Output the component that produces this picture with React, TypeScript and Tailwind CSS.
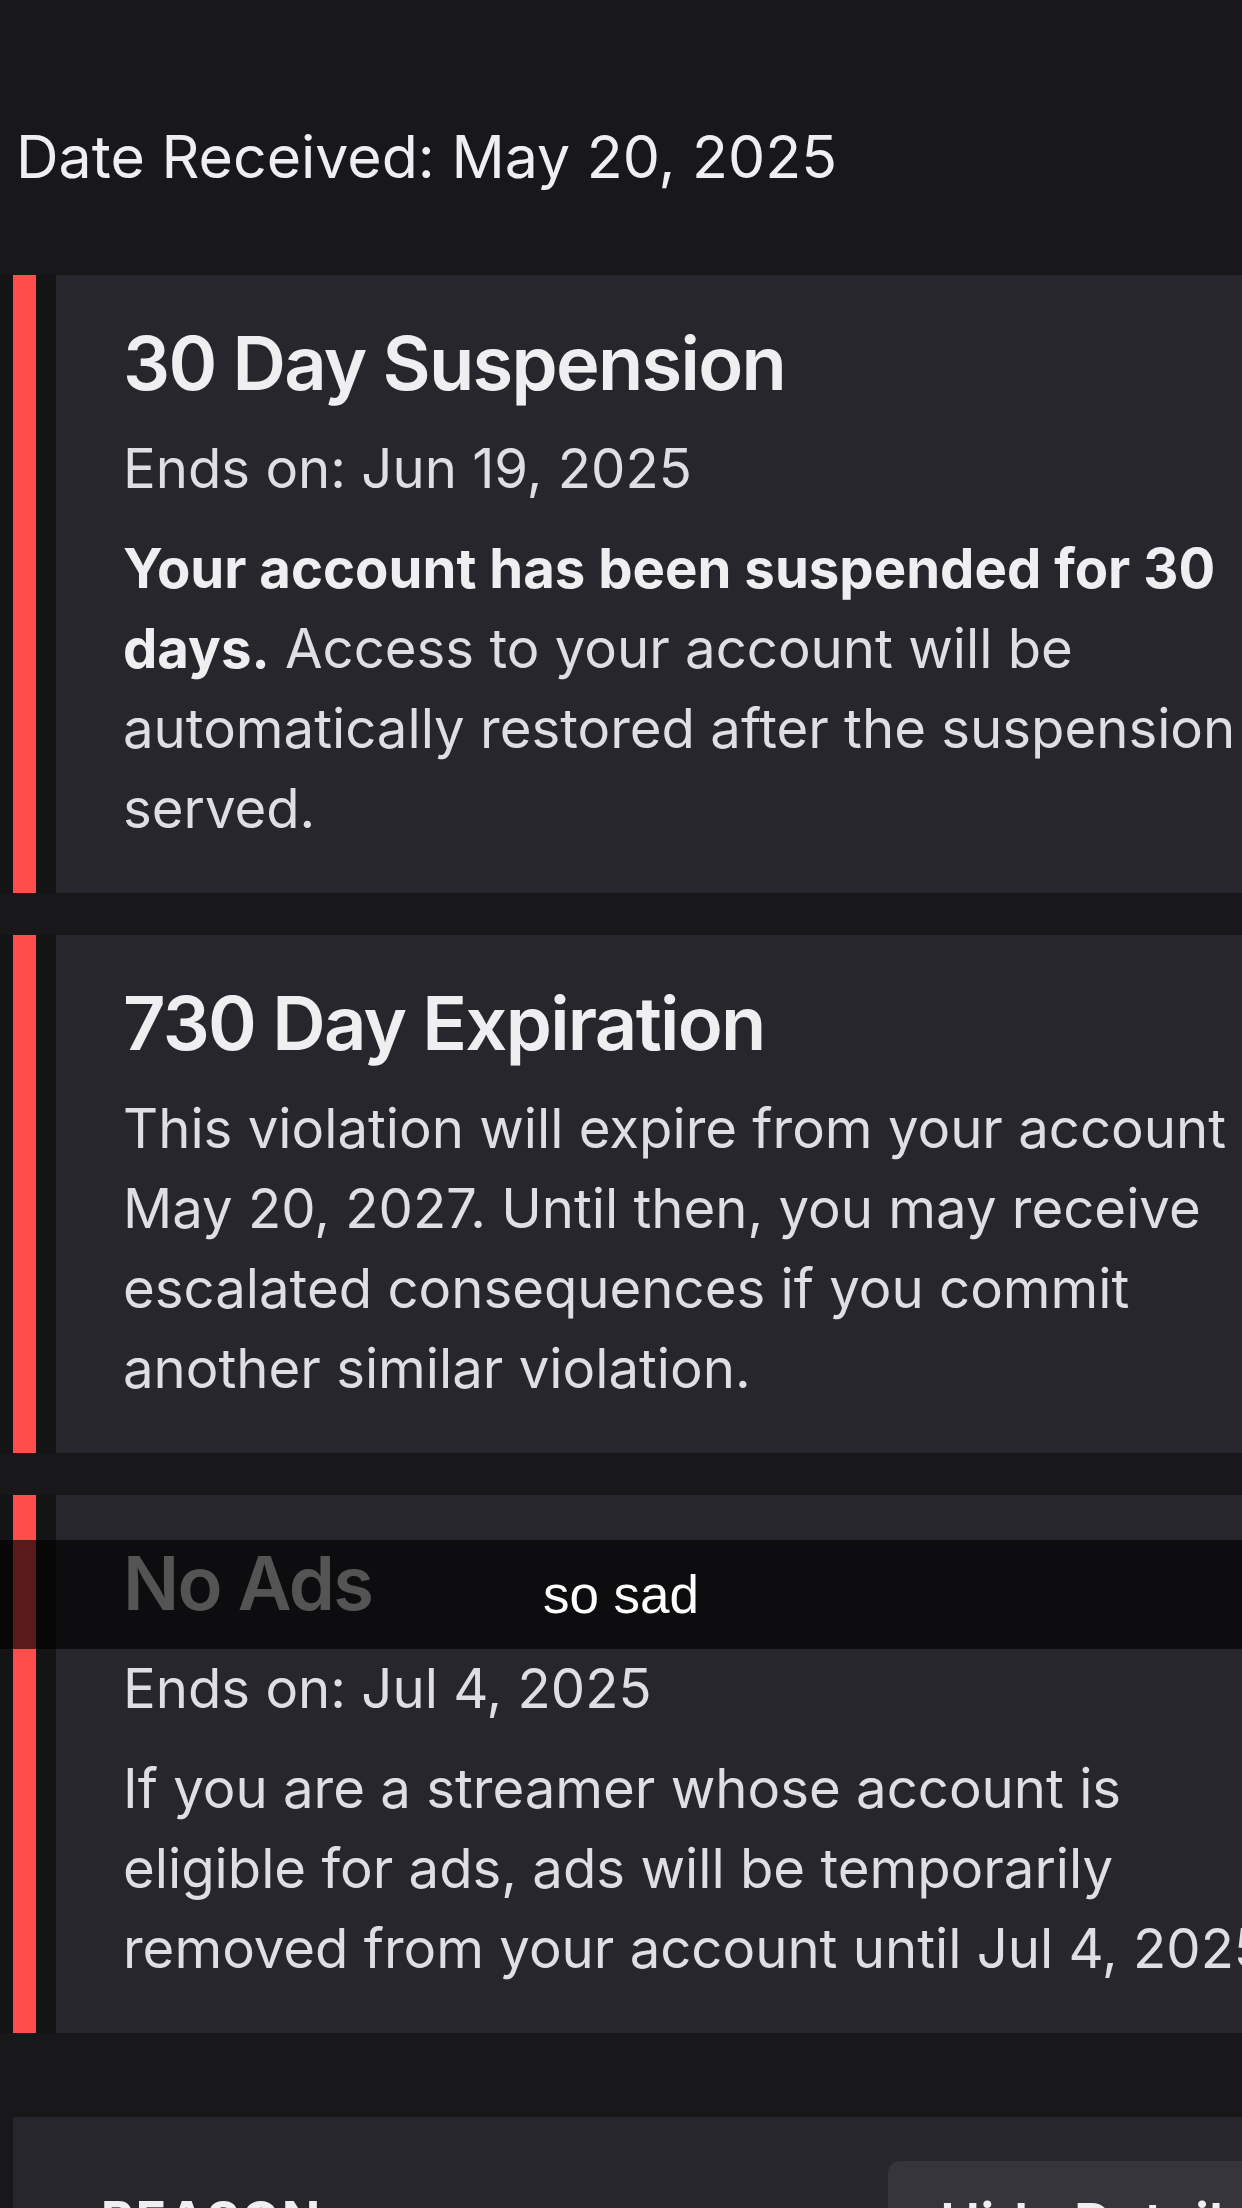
import React from 'react';

type Violation = {
  title: string;
  endsOn?: string;
  lines: React.ReactNode[];
};

const violations: Violation[] = [
  {
    title: '30 Day Suspension',
    endsOn: 'Jun 19, 2025',
    lines: [
      <span className="font-bold text-[#efeff1]">Your account has been suspended for 30</span>,
      <>
        <span className="font-bold text-[#efeff1]">days.</span> Access to your account will be
      </>,
      'automatically restored after the suspension is',
      'served.',
    ],
  },
  {
    title: '730 Day Expiration',
    lines: [
      'This violation will expire from your account on',
      'May 20, 2027. Until then, you may receive',
      'escalated consequences if you commit',
      'another similar violation.',
    ],
  },
  {
    title: 'No Ads',
    endsOn: 'Jul 4, 2025',
    lines: [
      'If you are a streamer whose account is',
      'eligible for ads, ads will be temporarily',
      'removed from your account until Jul 4, 2025.',
    ],
  },
];

const ViolationCard: React.FC<{ v: Violation }> = ({ v }) => (
  <div className="flex items-stretch bg-[#141417]">
    <div className="ml-[13px] w-[23px] shrink-0 bg-[#ff4d4b]"></div>
    <div className="ml-[20px] w-[1400px] shrink-0 bg-[#26262c] pl-[67px] pt-[43px] pb-[45px] flex flex-col gap-[20px]">
      <h2 className="text-[74px] leading-[90px] font-semibold text-[#efeff1] tracking-[-0.023em]">{v.title}</h2>
      {v.endsOn && (
        <p className="text-[54.5px] leading-[80px] text-[#dedee3]">Ends on: {v.endsOn}</p>
      )}
      <p className="text-[54.5px] leading-[80px] text-[#dedee3] whitespace-nowrap">
        {v.lines.map((line, i) => (
          <span key={i} className="block">{line}</span>
        ))}
      </p>
    </div>
  </div>
);

export default function App() {
  return (
    <div
      className="relative w-[1242px] h-[2208px] overflow-hidden bg-[#18181b]"
      style={{ fontFamily: 'Inter, "Noto Sans", sans-serif' }}
    >
      <div className="pt-[122px] pl-[16px]">
        <p className="text-[59px] leading-[70px] text-[#efeff1]">Date Received: May 20, 2025</p>
      </div>

      <div className="mt-[83px] flex flex-col gap-[42px]">
        {violations.map((v) => (
          <ViolationCard key={v.title} v={v} />
        ))}
      </div>

      {/* Reason / details card */}
      <div className="mt-[84px] ml-[13px] w-[1400px] bg-[#26262c] flex items-start pt-[44px]">
        <div className="w-[875px] shrink-0 pl-[88px] pt-[28px] text-[50px] leading-[60px] font-bold tracking-[0.04em] text-[#efeff1] uppercase">
          Reason
        </div>
        <button className="shrink-0 rounded-[12px] bg-[#35353b] pl-[52px] pr-[60px] pt-[30px] pb-[30px] text-[54px] leading-[64px] font-semibold text-[#efeff1]">
          Hide Details
        </button>
      </div>

      {/* Caption overlay */}
      <div className="absolute left-0 right-0 top-[1540px] h-[109px] bg-black/65 flex items-center justify-center">
        <span
          className="text-[53px] text-white"
          style={{ fontFamily: '"Liberation Sans", Arial, sans-serif' }}
        >
          so sad
        </span>
      </div>
    </div>
  );
}
